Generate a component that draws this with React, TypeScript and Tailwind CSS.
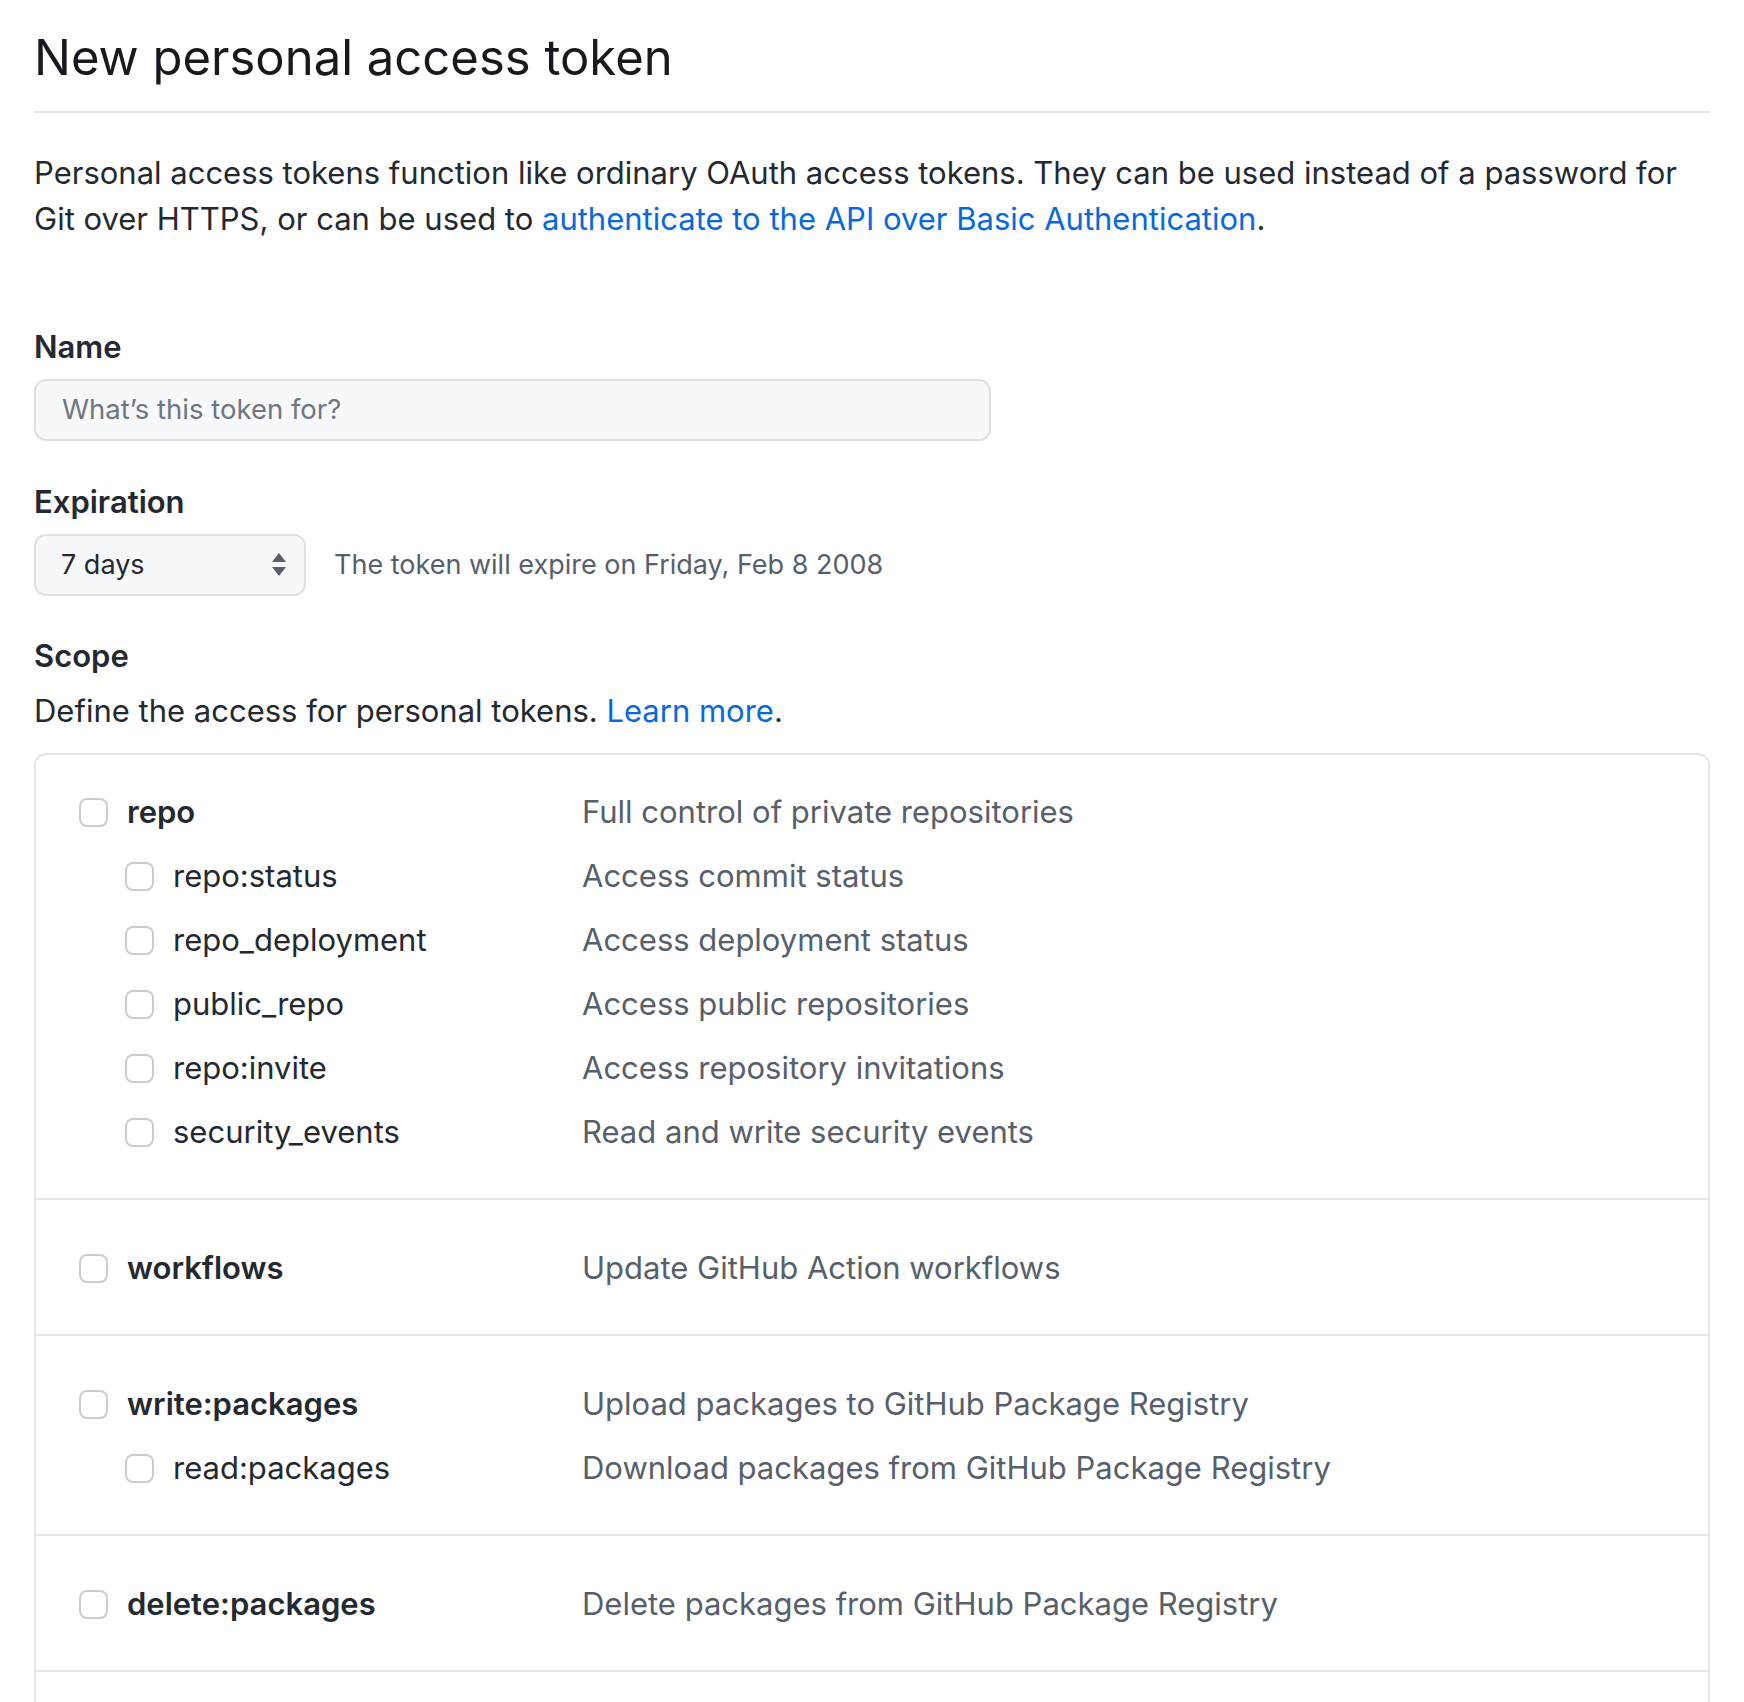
import React from "react";

type Scope = { name: string; desc: string; sub?: boolean };

const groups: { first?: boolean; items: Scope[] }[] = [
  {
    first: true,
    items: [
      { name: "repo", desc: "Full control of private repositories" },
      { name: "repo:status", desc: "Access commit status", sub: true },
      { name: "repo_deployment", desc: "Access deployment status", sub: true },
      { name: "public_repo", desc: "Access public repositories", sub: true },
      { name: "repo:invite", desc: "Access repository invitations", sub: true },
      { name: "security_events", desc: "Read and write security events", sub: true },
    ],
  },
  { items: [{ name: "workflows", desc: "Update GitHub Action workflows" }] },
  {
    items: [
      { name: "write:packages", desc: "Upload packages to GitHub Package Registry" },
      { name: "read:packages", desc: "Download packages from GitHub Package Registry", sub: true },
    ],
  },
  { items: [{ name: "delete:packages", desc: "Delete packages from GitHub Package Registry" }] },
];

function Checkbox() {
  return <span className="block w-[29px] h-[29px] rounded-[8px] border-2 border-[#c9cdd2] bg-white shrink-0" />;
}

function Row({ s }: { s: Scope }) {
  return (
    <div className="flex items-center h-[64px]">
      <div className={`flex items-center w-[546px] shrink-0 ${s.sub ? "pl-[89px]" : "pl-[43px]"}`}>
        <Checkbox />
        <span className={`ml-[19px] text-[31px] text-[#24292f] ${s.sub ? "font-normal" : "font-semibold"}`}>{s.name}</span>
      </div>
      <span className="text-[31px] text-[#57606a]">{s.desc}</span>
    </div>
  );
}

export default function App() {
  return (
    <div
      className="min-h-screen bg-white px-[34px] pt-[28px]"
      style={{ fontFamily: "Inter, 'Noto Sans', sans-serif" }}
    >
      <h1 className="text-[49px] leading-[60px] font-normal text-[#161a1e] pb-[23px] border-b-2 border-[#e3e6ea]">
        New personal access token
      </h1>

      <p className="mt-[37px] text-[31px] leading-[46px] text-[#24292f]">
        Personal access tokens function like ordinary OAuth access tokens. They can be used instead of a password for
        <br />
        Git over HTTPS, or can be used to{" "}
        <a className="text-[#0969da]">authenticate to the API over Basic Authentication</a>.
      </p>

      <div className="mt-[85px]">
        <label className="block text-[31px] leading-[40px] font-semibold text-[#24292f]">Name</label>
        <div className="mt-[12px] w-[957px] h-[62px] rounded-[12px] border-2 border-[#dde1e6] bg-[#f6f8fa] flex items-center pl-[26px]">
          <span className="text-[27.5px] text-[#6e7781]">What’s this token for?</span>
        </div>
      </div>

      <div className="mt-[41px]">
        <label className="block text-[31px] leading-[40px] font-semibold text-[#24292f]">Expiration</label>
        <div className="mt-[12px] flex items-center">
          <div className="w-[272px] h-[62px] rounded-[12px] border-2 border-[#dde1e6] bg-[#f6f8fa] flex items-center justify-between pl-[25px] pr-[16px]">
            <span className="text-[27px] text-[#24292f]">7 days</span>
            <svg width="18" height="28" viewBox="0 0 18 28">
              <path d="M9 2 L16 11 L2 11 Z" fill="#57606a" />
              <path d="M2 16 L16 16 L9 25 Z" fill="#57606a" />
            </svg>
          </div>
          <span className="ml-[28px] text-[27px] text-[#57606a]">The token will expire on Friday, Feb 8 2008</span>
        </div>
      </div>

      <div className="mt-[40px]">
        <label className="block text-[31px] leading-[40px] font-semibold text-[#24292f]">Scope</label>
        <p className="mt-[12px] text-[31px] leading-[46px] text-[#24292f]">
          Define the access for personal tokens. <a className="text-[#0969da]">Learn more</a>.
        </p>
      </div>

      <div className="mt-[19px] border-2 border-[#e3e6ea] rounded-[12px]">
        {groups.map((g, i) => (
          <div
            key={i}
            className={`${g.first ? "pt-[25px] pb-[34px]" : "pt-[36px] pb-[34px]"} ${i > 0 ? "border-t-2 border-[#e3e6ea]" : ""}`}
          >
            {g.items.map((s) => (
              <Row key={s.name} s={s} />
            ))}
          </div>
        ))}
        <div className="h-[60px] border-t-2 border-[#e3e6ea]" />
      </div>
    </div>
  );
}
